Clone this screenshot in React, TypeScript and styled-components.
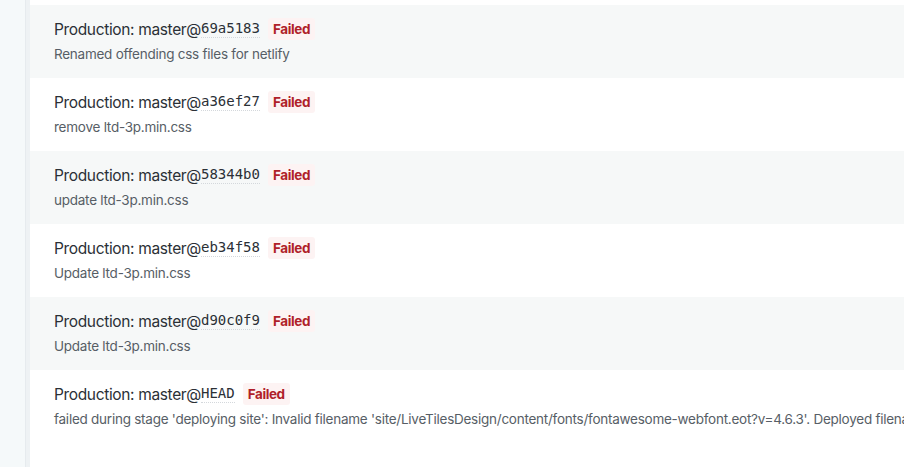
import React from "react";
import styled, { createGlobalStyle } from "styled-components";

const Global = createGlobalStyle`
  html, body { margin: 0; padding: 0; background: #ffffff; }
  body { font-family: Inter, "Noto Sans", sans-serif; -webkit-font-smoothing: antialiased; }
  #root { height: 467px; overflow: hidden; }
`;

const Page = styled.div`
  display: flex;
  height: 467px;
  overflow: hidden;
`;

const Sidebar = styled.div`
  width: 26px;
  flex: none;
  background: #f5f9fa;
  border-right: 4px solid #eef2f4;
  box-shadow: inset -1px 0 0 #e6ebee;
`;

const List = styled.div`
  flex: 1;
  min-width: 0;
  padding-top: 5px;
`;

const Row = styled.div<{ $shaded: boolean }>`
  height: 73px;
  box-sizing: border-box;
  padding: 12px 0 0 24px;
  background: ${(p) => (p.$shaded ? "#f6f8f8" : "#ffffff")};
  white-space: nowrap;
  overflow: hidden;
`;

const Title = styled.div`
  display: flex;
  align-items: center;
  height: 24px;
  font-size: 15.5px;
  letter-spacing: -0.35px;
  color: #2b3036;
`;

const Ref = styled.span`
  margin-left: 4px;
`;

const Hash = styled.span`
  font-family: "DejaVu Sans Mono", "Liberation Mono", monospace;
  font-size: 14px;
  letter-spacing: 0;
  border-bottom: 1px dotted #d4d8dc;
  padding-bottom: 1px;
`;

const Badge = styled.span`
  margin-left: 8px;
  padding: 2px 5px;
  background: #fdf3f3;
  color: #b01f2a;
  font-weight: 700;
  font-size: 13.5px;
  letter-spacing: -0.4px;
  border-radius: 3px;
  line-height: 18px;
`;

const Message = styled.div`
  margin-top: 3px;
  font-size: 13.5px;
  letter-spacing: -0.25px;
  color: #575e66;
  line-height: 20px;
`;

const deploys = [
  { hash: "69a5183", msg: "Renamed offending css files for netlify" },
  { hash: "a36ef27", msg: "remove ltd-3p.min.css" },
  { hash: "58344b0", msg: "update ltd-3p.min.css" },
  { hash: "eb34f58", msg: "Update ltd-3p.min.css" },
  { hash: "d90c0f9", msg: "Update ltd-3p.min.css" },
  {
    hash: "HEAD",
    msg: "failed during stage 'deploying site': Invalid filename 'site/LiveTilesDesign/content/fonts/fontawesome-webfont.eot?v=4.6.3'. Deployed filenames cannot contain # or ? characters",
  },
];

export default function App() {
  return (
    <>
      <Global />
      <Page>
        <Sidebar />
        <List>
          {deploys.map((d, i) => (
            <Row key={d.hash} $shaded={i % 2 === 0}>
              <Title>
                Production:<Ref>master@</Ref>
                <Hash>{d.hash}</Hash>
                <Badge>Failed</Badge>
              </Title>
              <Message>{d.msg}</Message>
            </Row>
          ))}
        </List>
      </Page>
    </>
  );
}
